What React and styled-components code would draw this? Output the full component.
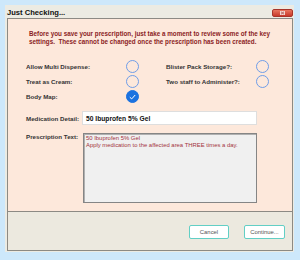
import React from 'react';
import styled, { createGlobalStyle } from 'styled-components';

const GlobalStyle = createGlobalStyle`
  html, body {
    margin: 0;
    padding: 0;
    background: #cde8fb;
  }
  body {
    width: 300px;
    height: 260px;
    overflow: hidden;
    font-family: "Liberation Sans", Arial, sans-serif;
  }
`;

const Window = styled.div`
  margin: 5px 0 0 5px;
  width: 289px;
  background: #ecebe3;
  padding: 0 1px 1px 2px;
  box-sizing: border-box;
`;

const TitleBar = styled.div`
  height: 13px;
  display: flex;
  align-items: center;
  justify-content: space-between;
  padding: 0 0 0 1px;
  margin-left: -1px;
`;

const Title = styled.span`
  font-size: 7.6px;
  font-weight: bold;
  color: #111;
  margin-top: 2px;
`;

const CloseButton = styled.div`
  width: 21px;
  height: 8px;
  margin-top: 3px;
  border-radius: 2px;
  background: linear-gradient(#e8765f, #c8392a);
  border: 1px solid #a8352a;
  box-sizing: border-box;
  display: flex;
  align-items: center;
  justify-content: center;
`;

const Client = styled.div`
  border: 1px solid #8c8a84;
  background: #ece9df;
`;

const Content = styled.div`
  height: 193px;
  background: #fde8db;
  border-bottom: 1px solid #8c8a84;
  padding: 11px 0 0 18px;
  box-sizing: border-box;
`;

const Intro = styled.p`
  margin: 0 0 0 3px;
  font-size: 6.3px;
  line-height: 8px;
  font-weight: bold;
  color: #8b1c24;
  white-space: pre;
`;

const OptionGrid = styled.div`
  margin-top: 14px;
  display: grid;
  grid-template-columns: 100px 40px 90px 13px;
  grid-auto-rows: 13px;
  row-gap: 2px;
  align-items: center;
`;

const Label = styled.span`
  font-size: 6.2px;
  font-weight: bold;
  color: #333;
  white-space: nowrap;
`;

const RadioCircle = styled.div`
  width: 13px;
  height: 13px;
  border-radius: 50%;
  box-sizing: border-box;
  border: 1.2px solid ${(p) => (p.$on ? '#1b72e0' : '#6f9de8')};
  background: ${(p) => (p.$on ? '#1b72e0' : 'transparent')};
  display: flex;
  align-items: center;
  justify-content: center;
`;

const FieldRow = styled.div`
  display: flex;
  align-items: ${(p) => (p.$top ? 'flex-start' : 'center')};
  margin-top: 8px;
`;

const FieldLabel = styled(Label)`
  width: ${(p) => p.$w}px;
  margin-top: ${(p) => (p.$top ? '0' : '1px')};
`;

const TextBox = styled.div`
  width: 175px;
  height: 14px;
  box-sizing: border-box;
  background: #fff;
  border: 1px solid #dedede;
  padding: 0 3px;
  display: flex;
  align-items: center;
  font-size: 6.7px;
  font-weight: bold;
  color: #111;
`;

const TextArea = styled.div`
  width: 174px;
  height: 70px;
  box-sizing: border-box;
  background: #f0f0f0;
  border: 1px solid #858585;
  box-shadow: inset 1px 1px 0 #b0b0b0;
  padding: 1px 2px;
  font-size: 5.9px;
  line-height: 7px;
  color: #a3333d;
`;

const Footer = styled.div`
  height: 38px;
  display: flex;
  justify-content: flex-end;
  align-items: center;
  gap: 15px;
  padding: 2px 7px 0 0;
  box-sizing: border-box;
`;

const Button = styled.div`
  width: ${(p) => p.$w}px;
  height: 14px;
  box-sizing: border-box;
  border: 1.5px solid #62cfc5;
  border-radius: 2px;
  background: #fff;
  display: flex;
  align-items: center;
  justify-content: center;
  font-size: 5.9px;
  color: #555;
`;

const Radio = ({ on }) => (
  <RadioCircle $on={on}>
    {on && (
      <svg width="7" height="6" viewBox="0 0 7 6">
        <polyline points="0.8,3.2 2.7,4.9 6.2,1" fill="none" stroke="#fff" strokeWidth="1" />
      </svg>
    )}
  </RadioCircle>
);

export default function App() {
  return (
    <>
      <GlobalStyle />
      <Window>
        <TitleBar>
          <Title>Just Checking...</Title>
          <CloseButton>
            <svg width="5" height="4" viewBox="0 0 5 4">
              <rect x="0" y="0" width="5" height="4" fill="#f3d6d0" />
              <path d="M1 0.8 L4 3.2 M4 0.8 L1 3.2" stroke="#a03a30" strokeWidth="0.7" />
            </svg>
          </CloseButton>
        </TitleBar>
        <Client>
          <Content>
            <Intro>
              {'Before you save your prescription, just take a moment to review some of the key\nsettings.  These cannot be changed once the prescription has been created.'}
            </Intro>
            <OptionGrid>
              <Label>Allow Multi Dispense:</Label>
              <Radio />
              <Label>Blister Pack Storage?:</Label>
              <Radio />
              <Label>Treat as Cream:</Label>
              <Radio />
              <Label>Two staff to Administer?:</Label>
              <Radio />
              <Label>Body Map:</Label>
              <Radio on />
            </OptionGrid>
            <FieldRow>
              <FieldLabel $w={56}>Medication Detail:</FieldLabel>
              <TextBox>50 Ibuprofen 5% Gel</TextBox>
            </FieldRow>
            <FieldRow $top>
              <FieldLabel $w={57} $top>Prescription Text:</FieldLabel>
              <TextArea>
                50 Ibuprofen 5% Gel
                <br />
                Apply medication to the affected area THREE times a day.
              </TextArea>
            </FieldRow>
          </Content>
          <Footer>
            <Button $w={40}>Cancel</Button>
            <Button $w={41}>Continue...</Button>
          </Footer>
        </Client>
      </Window>
    </>
  );
}
